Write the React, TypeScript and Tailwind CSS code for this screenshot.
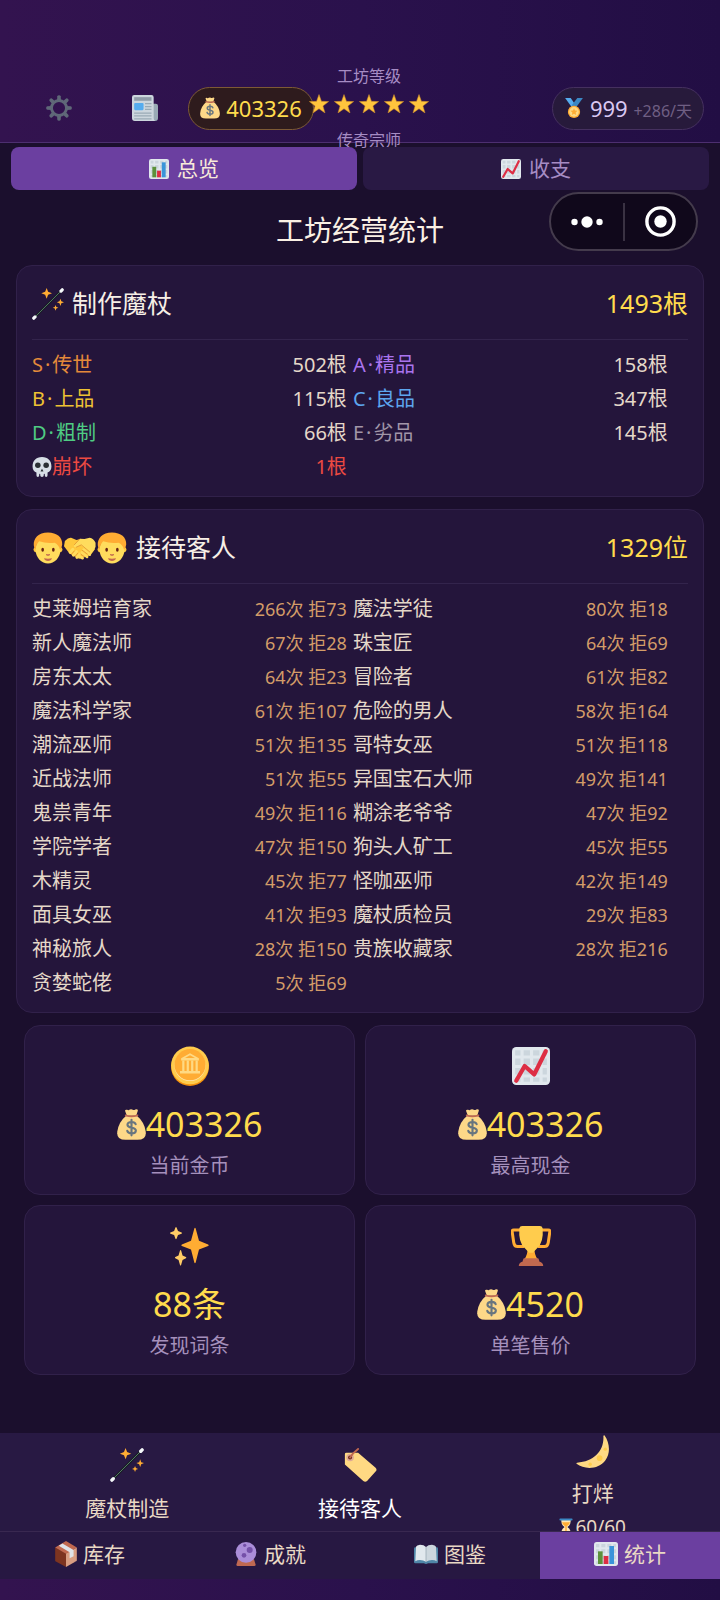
import type { ReactNode } from "react";

type IconProps = { className?: string };

function Svg({ className = "size-6", box = "0 0 36 36", children }: { className?: string; box?: string; children: ReactNode }) {
  return (
    <svg className={`shrink-0 ${className}`} viewBox={box} aria-hidden="true">
      {children}
    </svg>
  );
}

const TEETH = [0, 45, 90, 135, 180, 225, 270, 315];

function Gear({ className }: IconProps) {
  return (
    <Svg className={className}>
      <circle cx="18" cy="18" r="10.4" fill="none" stroke="#5f6878" strokeWidth="4" />
      {TEETH.map((a) => (
        <path key={a} d="M15.2 7.5 15.7 1.8Q16 .2 18 .2T20.3 1.8L20.8 7.5Z" fill="#5f6878" transform={`rotate(${a} 18 18)`} />
      ))}
    </Svg>
  );
}

function Newspaper({ className }: IconProps) {
  return (
    <Svg className={className}>
      <path d="M26 12h7a3 3 0 0 1 3 3v17a4 4 0 0 1-4 4h-6z" fill="#99aab5" />
      <path d="M3 0h24a3 3 0 0 1 3 3v29q0 3 2 4H4a4 4 0 0 1-4-4V3a3 3 0 0 1 3-3z" fill="#ccd6dd" />
      <path d="M3 3h24v5H3z" fill="#8f9ca8" />
      <rect x="3" y="11" width="13" height="10" rx="1.5" fill="#55acee" />
      <path d="M18 12h9M18 16h9M18 20h9M3 25h24M3 29h24M3 33h24" stroke="#99aab5" strokeWidth="1.7" />
    </Svg>
  );
}

function MoneyBag({ className }: IconProps) {
  return (
    <Svg className={className} box="1 0 34 36">
      <path d="M12.5 7.5 10.4 2Q10.6.2 13 .8q1.5 1 3-.4 2-.9 3.4.2 1.5 1 3-.2 2.9-.8 3.1 1.2L23.6 7.5z" fill="#fdd888" />
      <path d="M12 7.5h12q9 7.5 10.6 18.5Q36 36 25 36H11Q0 36 1.4 26 3 15 12 7.5z" fill="#fdd888" />
      <path d="M10.8 6.2Q18 8.6 25 6.2q1.4-.2 1 1.2-.3.9-1.3 1.1Q18 10.2 11.4 8.6q-1-.3-1.2-1.2-.2-1 .6-1.2z" fill="#bf6952" />
      <path d="M18 12.500v18.200M22.900 17.700c-.6-2-2.300-2.700-4.700-2.700-2.800 0-4.900 1.100-4.900 3.300 0 5 9.800 2 9.800 6.800 0 2.200-2 3.400-4.900 3.400-2.800 0-4.700-1-5.200-3.100" fill="none" stroke="#67757f" strokeWidth="2.5" strokeLinecap="round" />
    </Svg>
  );
}

function ChartPanel() {
  return (
    <>
      <rect width="36" height="36" rx="4" fill="#e1e8ed" />
      <path d="M3 3h5v5H3zm8 0h6v5h-6zm9 0h6v5h-6zm9 0h4v5h-4zM3 11h5v6H3zm8 0h6v6h-6zm9 0h6v6h-6zm9 0h4v6h-4zM3 20h5v6H3zm8 0h6v6h-6zm9 0h6v6h-6zm9 0h4v6h-4zM3 29h5v4H3zm8 0h6v4h-6zm9 0h6v4h-6zm9 0h4v4h-4z" fill="#ccd6dd" />
    </>
  );
}

function BarChart({ className }: IconProps) {
  return (
    <Svg className={className}>
      <ChartPanel />
      <path d="M6 14h7v19H6z" fill="#5c913b" />
      <path d="M14.5 21h7v12h-7z" fill="#dd2e44" />
      <path d="M23 6h7v27h-7z" fill="#3b94d9" />
    </Svg>
  );
}

function LineChart({ className }: IconProps) {
  return (
    <Svg className={className}>
      <ChartPanel />
      <path d="M4 32 12 18l9 8L32 4" fill="none" stroke="#dd2e44" strokeWidth="4" strokeLinecap="round" strokeLinejoin="round" />
    </Svg>
  );
}

function Medal({ className }: IconProps) {
  return (
    <Svg className={className}>
      <path d="M2 0h10l9 13-6 5z" fill="#55acee" />
      <path d="M34 0H24L14 13l7 5z" fill="#3b88c3" />
      <circle cx="18" cy="25" r="11" fill="#ffac33" />
      <circle cx="18" cy="25" r="8.6" fill="#ffd983" />
      <path d="m18 18.5 1.8 4.2 4.6.4-3.5 3 1.1 4.5-4-2.4-4 2.4 1.1-4.5-3.5-3 4.6-.4z" fill="#ffac33" />
    </Svg>
  );
}

function Star({ className }: IconProps) {
  return (
    <Svg className={className}>
      <path d="m18 1 4.4 12.2 13 .4-10.3 7.9 3.7 12.5L18 26.600 7.200 34l3.700-12.500L.600 13.600l13-.4z" fill="#ffc53d" stroke="#c9862c" strokeWidth="1" />
    </Svg>
  );
}

function Wand({ className }: IconProps) {
  return (
    <Svg className={className}>
      <path d="M3 33 33 3" stroke="#1a1f22" strokeWidth="2.400" />
      <path d="M3.500 32.500l29-29" stroke="#56806b" strokeWidth="1" />
      <path d="m2 34 1.400-1.400M32.600 3.400 34 2" stroke="#f5f8fa" strokeWidth="3.600" strokeLinecap="round" />
      <path d="m16.500 0 1.600 4.300 4.400 1.700-4.400 1.600-1.600 4.400-1.700-4.400-4.300-1.600 4.300-1.700zM32 12l1 3 3 1-3 1.200-1 3-1.100-3-3-1.200 3-1zM26.500 19l.9 2.300 2.300.9-2.300.9-.9 2.400-.9-2.400-2.300-.9 2.300-.9z" fill="#ffac33" />
    </Svg>
  );
}

function Skull({ className }: IconProps) {
  return (
    <Svg className={className}>
      <path d="M18 0C7 0 1 7 1 17c0 6 3 9 7 11v5q0 3 2.500 3t2.500-3v-2q0-1 .9-1t.9 1v2q0 3 3.200 3t3.200-3v-2q0-1 .9-1t.9 1v2q0 3 2.500 3t2.500-3v-5c4-2 7-5 7-11C35 7 29 0 18 0z" fill="#d7dfe6" />
      <circle cx="10.500" cy="15" r="5" fill="#292f33" />
      <circle cx="25.500" cy="15" r="5" fill="#292f33" />
      <path d="m18 21 2.600 4.500q-1.300 1.200-2.600 0-1.300 1.200-2.600 0z" fill="#292f33" />
    </Svg>
  );
}

function Face({ className }: IconProps) {
  return (
    <Svg className={className}>
      <circle cx="4.500" cy="20" r="2.800" fill="#ffc83d" />
      <circle cx="31.500" cy="20" r="2.800" fill="#ffc83d" />
      <path d="M18 4C9 4 4 11 4 20c0 9 7 15.500 14 15.500S32 29 32 20c0-9-5-16-14-16z" fill="#ffdc5d" />
      <path d="M18 .500C7 .500 1.500 7 2 15q.3 3.500 2 5 .5-6 4-9.500 9 3 17.500 1.500 5 2.500 6 8 2-2 2.500-6C34.500 6 28 .500 18 .500z" fill="#ffac33" />
      <ellipse cx="12" cy="20" rx="1.500" ry="2.300" fill="#662113" />
      <ellipse cx="24" cy="20" rx="1.500" ry="2.300" fill="#662113" />
      <path d="M16.500 25.500q1.500 1 3 0" stroke="#c1694f" strokeWidth="1.500" fill="none" strokeLinecap="round" />
      <path d="M13.500 29.500q4.500 1 9 0-1 3-4.500 3t-4.500-3z" fill="#c1694f" />
    </Svg>
  );
}

function Handshake({ className }: IconProps) {
  return (
    <Svg className={className}>
      <path d="M1 10Q5 6 8 6.500L14 9l5-1 8 3 8 8-5 7-13 4L6 24 0 16z" fill="#ffc83d" />
      <path d="M35.500 12Q33 7 29 6.500L23 8l-5-.500-7 7q-.5 3 3 2.500l5-2.500L30 25q3-3 5.500-8z" fill="#ffdc5d" />
      <path d="M7 23l3-3.500M10.500 26l3.500-4M14.500 28.500l3-3.500" stroke="#ffdc5d" strokeWidth="3.400" strokeLinecap="round" />
      <path d="m18 28 3 1.500M20 23l6 5M22 20l7 5.500" stroke="#ffdc5d" strokeWidth="3" strokeLinecap="round" />
      <path d="m11.500 14.500 6-6.500M14 17l5.500-2.500L29 22.500M20.500 20.500l6 4.500M8.500 25l3-3.500M12.500 27.500l3-3.500M19 25l4 3" stroke="#e39a34" strokeWidth="1" fill="none" strokeLinecap="round" />
    </Svg>
  );
}

function Coin({ className }: IconProps) {
  return (
    <Svg className={className}>
      <circle cx="18" cy="19" r="17" fill="#f4900c" />
      <circle cx="18" cy="17.500" r="17" fill="#ffcc4d" />
      <circle cx="18" cy="17.500" r="14" fill="#ffe8b6" />
      <circle cx="18" cy="16.800" r="14" fill="#ffac33" />
      <path d="M9 22.500h18v2.300H9zM10 11l8-4.500 8 4.500v2H10z" fill="#ffd983" />
      <path d="M12 13v10m4-10v10m4-10v10m4-10v10" stroke="#ffd983" strokeWidth="2" />
      <path d="M13.500 10.700 18 8.300l4.500 2.400z" fill="#ffac33" />
    </Svg>
  );
}

function Sparkles({ className }: IconProps) {
  return (
    <Svg className={className}>
      <path d="M34.300 16.600l-8.200-3.300-3-11.100q-.6-1.400-1.200 0l-3 11.100-8.200 3.300q-1.200.7 0 1.400l8.200 3.200 3 11.700q.6 1.400 1.200 0l3-11.700 8.200-3.200q1.300-.7 0-1.400z" fill="#ffac33" />
      <path d="m14.300 28-3-1.500-1.300-4.500q-.5-.9-1 0L7.700 26.500 4.800 28q-.7.500 0 1L7.700 30.500 9 35q.5.900 1 0l1.300-4.500 3-1.500q.7-.5 0-1zM10.400 5.800 7.200 4.600 5.900 1.300q-.5-.8-1 0L3.700 4.600.4 5.800q-.8.600 0 1.100l3.300 1.200 1.200 3.400q.5.800 1 0l1.300-3.400 3.200-1.200q.8-.5 0-1.100z" fill="#ffcc66" />
    </Svg>
  );
}

function Trophy({ className }: IconProps) {
  return (
    <Svg className={className}>
      <path d="M9 3.500H2.500Q1 3.500 1 5l1.500 10q.5 3.500 3.500 3.500h6M27 3.500h6.500Q35 3.500 35 5l-1.500 10q-.5 3.500-3.500 3.500h-6" fill="none" stroke="#ffac33" strokeWidth="2.700" />
      <path d="M15 20h6q0 6 3 10H12q3-4 3-10z" fill="#ffac33" />
      <path d="M7.500 2Q8 0 10 0h16q2 0 2.500 2 1 13-5 18-2.500 2.500-3.500 4h-4q-1-1.500-3.500-4-6-5-5-18z" fill="#ffcc4d" />
      <path d="M11.500 29h13q1 1.500 1 3 3.500 1 3.500 4H7q0-3 3.500-4 0-1.500 1-3z" fill="#c1694f" />
    </Svg>
  );
}

function Tag({ className }: IconProps) {
  return (
    <Svg className={className}>
      <path d="M3.500 5H16l18.500 16q2 2 0 4l-9 10q-2 1.700-4 0L2 17.500V6.500Q2 5 3.500 5z" fill="#ffd983" />
      <circle cx="7.500" cy="10" r="4" fill="#e0aa94" />
      <circle cx="7.500" cy="10" r="2.100" fill="#662113" />
      <path d="M7.500 10Q10 5.500 16 1" fill="none" stroke="#c1694f" strokeWidth="2" strokeLinecap="round" />
    </Svg>
  );
}

function Moon({ className }: IconProps) {
  return (
    <Svg className={className}>
      <path d="M30.300.500C35.500 8 37 19 31 27 24 36.500 9 37 .6 30.500q-.6-1 .6-1.100C19 28 30 17 29 1q.4-1.100 1.300-.5z" fill="#ffd983" />
      <circle cx="31" cy="15" r="1.800" fill="#ffcc4d" />
      <circle cx="25" cy="24.500" r="3" fill="#ffcc4d" />
      <circle cx="15" cy="31" r="1.800" fill="#ffcc4d" />
    </Svg>
  );
}

function Hourglass({ className }: IconProps) {
  return (
    <Svg className={className} box="3 0 30 36">
      <path d="M8 3h20q1 10-7 15 8 5 7 15H8Q7 23 15 18 7 13 8 3z" fill="#ffe8b6" />
      <path d="M9.500 8h17q-1 5-7 8.500v10q4 1.500 7 6h-17q3-4.500 7-6v-10q-6-3.500-7-8.500z" fill="#ffac33" />
      <rect x="4" width="28" height="4" rx="1.500" fill="#3b88c3" />
      <rect x="4" y="32" width="28" height="4" rx="1.500" fill="#3b88c3" />
    </Svg>
  );
}

function Parcel({ className }: IconProps) {
  return (
    <Svg className={className} box="0 0 30 36">
      <path d="M0 9 15 17v19L1 28.500Q0 28 0 27z" fill="#7d3420" />
      <path d="M15 17 30 9v17.500q0 1-1 1.600L15 36z" fill="#d99e82" />
      <path d="M15 0 30 9l-15 8.500L0 9z" fill="#c1694f" />
      <path d="m10 3.500 15.500 9V21L20 24v-8.500L5 6.500z" fill="#dfe3e8" />
    </Svg>
  );
}

function CrystalBall({ className }: IconProps) {
  return (
    <Svg className={className}>
      <path d="M6 26h24l2.500 8q0 2-2 2h-25q-2 0-2-2z" fill="#bf6952" />
      <circle cx="18" cy="15.500" r="15.500" fill="#aa8dd8" />
      <circle cx="23.500" cy="12" r="4.500" fill="#7450a8" />
      <circle cx="15" cy="20" r="3.500" fill="#7450a8" />
      <circle cx="16" cy="5" r="2.500" fill="#7450a8" />
    </Svg>
  );
}

function OpenBook({ className }: IconProps) {
  return (
    <Svg className={className}>
      <path d="M0 10q0-2 2-2h32q2 0 2 2v20q0 2-2 2H21q-3 2-6 0H2q-2 0-2-2z" fill="#4f86a8" />
      <path d="M3 7q1-2.500 6-3 6 0 9 3.500v22Q14 27 9 27q-4 0-7 2z" fill="#e1e8ed" />
      <path d="M33 7q-1-2.500-6-3-6 0-9 3.500v22q4-2.500 9-2.500 4 0 7 2z" fill="#ccd6dd" />
      <path d="M18 7.500v22" stroke="#99aab5" strokeWidth="1.200" />
    </Svg>
  );
}

type Grade = { rank?: string; name: string; count: string; tone: string; valueTone?: string };

const GRADES: Grade[] = [
  { rank: "S", name: "传世", count: "502根", tone: "text-[#e48a3a]" },
  { rank: "A", name: "精品", count: "158根", tone: "text-[#a974ee]" },
  { rank: "B", name: "上品", count: "115根", tone: "text-[#eec233]" },
  { rank: "C", name: "良品", count: "347根", tone: "text-[#5da5ee]" },
  { rank: "D", name: "粗制", count: "66根", tone: "text-[#4fcb83]" },
  { rank: "E", name: "劣品", count: "145根", tone: "text-[#a196a8]" },
  { name: "崩坏", count: "1根", tone: "text-[#ec4a42]", valueTone: "text-[#ec4a42]" },
];

const GUESTS: [string, number, number][] = [
  ["史莱姆培育家", 266, 73],
  ["魔法学徒", 80, 18],
  ["新人魔法师", 67, 28],
  ["珠宝匠", 64, 69],
  ["房东太太", 64, 23],
  ["冒险者", 61, 82],
  ["魔法科学家", 61, 107],
  ["危险的男人", 58, 164],
  ["潮流巫师", 51, 135],
  ["哥特女巫", 51, 118],
  ["近战法师", 51, 55],
  ["异国宝石大师", 49, 141],
  ["鬼祟青年", 49, 116],
  ["糊涂老爷爷", 47, 92],
  ["学院学者", 47, 150],
  ["狗头人矿工", 45, 55],
  ["木精灵", 45, 77],
  ["怪咖巫师", 42, 149],
  ["面具女巫", 41, 93],
  ["魔杖质检员", 29, 83],
  ["神秘旅人", 28, 150],
  ["贵族收藏家", 28, 216],
  ["贪婪蛇佬", 5, 69],
];

function Panel({ icon, title, total, children }: { icon: ReactNode; title: string; total: string; children: ReactNode }) {
  return (
    <section className="mx-4 rounded-2xl border border-[#31214a] bg-[#24153b] px-[15px] pb-3">
      <div className="flex h-[74px] items-center justify-between border-b border-[#33244c] pt-[2px] text-[25px]">
        <h2 className="flex items-center gap-2 text-[#f7efe6]">
          <span className="flex">{icon}</span>
          {title}
        </h2>
        <span className="text-[#ffdb4d]">{total}</span>
      </div>
      <dl className="flex flex-wrap gap-x-[6px] pt-2 text-xl leading-[34px] text-[#e5d8c9]">{children}</dl>
    </section>
  );
}

function StatCard({ icon, bag, value, label }: { icon: ReactNode; bag?: boolean; value: string; label: string }) {
  return (
    <div className="flex flex-col items-center rounded-2xl border border-[#31214a] bg-[#24153b] pt-5 pb-3">
      {icon}
      <p className="mt-3 flex items-center text-[34px] leading-[52px] text-[#ffdb4d]">
        {bag && <MoneyBag className="h-[33px] w-[29px]" />}
        {value}
      </p>
      <p className="text-xl leading-8 text-[#a590bc]">{label}</p>
    </div>
  );
}

function BottomTab({ icon, label, active }: { icon: ReactNode; label: string; active?: boolean }) {
  return (
    <button
      type="button"
      className={`flex flex-1 items-center justify-center gap-[6px] pb-1 text-[21px] leading-8 text-[#e9d8c4] ${active ? "bg-[#6b3fa0]" : ""}`}
    >
      {icon}
      {label}
    </button>
  );
}

export default function App() {
  return (
    <div className="relative flex min-h-screen flex-col bg-[#1b0f2d] font-['Noto_Sans','Noto_Sans_CJK_SC',sans-serif]">
      <header className="border-b border-[#4d2f70] bg-linear-to-r from-[#33134f] via-[#2a114c] to-[#220e44] px-4 pt-[74px]">
        <div className="flex h-[68px] items-center">
          <button type="button" aria-label="设置" className="flex w-[86px] justify-center">
            <Gear className="size-[26px]" />
          </button>
          <button type="button" aria-label="新闻" className="flex w-[86px] justify-center">
            <Newspaper className="size-[26px]" />
          </button>
          <div className="flex h-[43px] w-[126px] shrink-0 items-center justify-center gap-[6px] rounded-full border border-[#7d5a35] bg-[#2e1b1d] text-[22px] text-[#ffdb4d]">
            <MoneyBag className="h-[22px] w-[20px]" />
            403326
          </div>
          <div className="flex w-[110px] flex-col items-center text-base leading-5 text-[#a68cc4]">
            <span>工坊等级</span>
            <span className="mt-1 mb-3 flex h-7 items-center gap-[5px]">
              <Star className="size-5" />
              <Star className="size-5" />
              <Star className="size-5" />
              <Star className="size-5" />
              <Star className="size-5" />
            </span>
            <span>传奇宗师</span>
          </div>
          <div className="ml-auto flex h-[43px] items-center gap-[6px] rounded-full border border-[#45305f] bg-[#271a3b] px-[11px] text-[22px] text-[#d9c8f2]">
            <Medal className="size-5" />
            <span>
              999 <span className="text-base text-[#6f5f83]">+286/天</span>
            </span>
          </div>
        </div>
      </header>

      <nav className="flex gap-[6px] px-[11px] pt-1 text-[21px]">
        <button type="button" className="flex h-[43px] flex-1 items-center justify-center gap-2 rounded-lg bg-[#6b3fa0] text-[#f8ead9]">
          <BarChart className="size-5" />
          总览
        </button>
        <button type="button" className="flex h-[43px] flex-1 items-center justify-center gap-2 rounded-lg bg-[#291944] text-[#a68cc4]">
          <LineChart className="size-5" />
          收支
        </button>
      </nav>

      <div className="absolute top-[192px] right-[22px] flex h-[59px] w-[149px] items-center rounded-full border-2 border-[#443b4c] bg-[#10081b]">
        <button type="button" aria-label="更多" className="flex flex-1 justify-center">
          <Svg className="h-3 w-8" box="0 0 32 12">
            <circle cx="3.500" cy="6" r="3.200" fill="#fff" />
            <circle cx="16" cy="6" r="5.700" fill="#fff" />
            <circle cx="28.500" cy="6" r="3.200" fill="#fff" />
          </Svg>
        </button>
        <span className="h-[38px] w-[2px] bg-[#3a3243]" />
        <button type="button" aria-label="关闭" className="flex flex-1 justify-center">
          <Svg className="size-[31px]" box="0 0 31 31">
            <circle cx="15.500" cy="15.500" r="13.600" fill="none" stroke="#fff" strokeWidth="3.400" />
            <circle cx="15.500" cy="15.500" r="6.200" fill="#fff" />
          </Svg>
        </button>
      </div>

      <main>
        <h1 className="flex h-[75px] items-center justify-center pt-1 text-[28px] text-[#faf0e4]">工坊经营统计</h1>

        <div className="flex flex-col gap-3">
          <Panel icon={<Wand className="size-8" />} title="制作魔杖" total="1493根">
            {GRADES.map((g) => (
              <div key={g.name} className="flex w-[48%] justify-between">
                <dt className={`flex items-center ${g.tone}`}>
                  {g.rank ? (
                    <span>
                      {g.rank}
                      <span className="mx-[2px]">·</span>
                    </span>
                  ) : (
                    <Skull className="size-5" />
                  )}
                  {g.name}
                </dt>
                <dd className={g.valueTone}>{g.count}</dd>
              </div>
            ))}
          </Panel>

          <Panel
            icon={
              <>
                <Face className="size-8" />
                <Handshake className="size-8" />
                <Face className="size-8" />
              </>
            }
            title="接待客人"
            total="1329位"
          >
            {GUESTS.map(([name, served, refused]) => (
              <div key={name} className="flex w-[48%] justify-between">
                <dt>{name}</dt>
                <dd className="text-lg leading-[34px] text-[#d39c68]">
                  {served}次 拒{refused}
                </dd>
              </div>
            ))}
          </Panel>

          <section className="grid grid-cols-2 gap-[10px] px-6">
            <StatCard icon={<Coin className="size-10" />} bag value="403326" label="当前金币" />
            <StatCard icon={<LineChart className="my-px size-[38px]" />} bag value="403326" label="最高现金" />
            <StatCard icon={<Sparkles className="size-10" />} value="88条" label="发现词条" />
            <StatCard icon={<Trophy className="size-10" />} bag value="4520" label="单笔售价" />
          </section>
        </div>
      </main>

      <footer className="mt-auto bg-linear-to-r from-[#33134f] via-[#2a114c] to-[#220e44] pb-[21px]">
        <div className="flex h-[99px] overflow-hidden border-b border-[#392850] bg-[#281943] px-[11px] text-[21px] leading-8 text-[#e9d8c4]">
          <button type="button" className="flex flex-1 flex-col items-center gap-[10px] pt-[15px]">
            <Wand className="size-[34px]" />
            魔杖制造
          </button>
          <button type="button" className="flex flex-1 flex-col items-center gap-[10px] pt-[15px] text-white">
            <Tag className="size-[34px]" />
            接待客人
          </button>
          <button type="button" className="flex flex-1 flex-col items-center pt-[2px]">
            <Moon className="size-[34px]" />
            <span className="mt-2">打烊</span>
            <span className="flex items-center gap-[2px] text-[19px] leading-9">
              <Hourglass className="h-[18px] w-[14px]" />
              60/60
            </span>
          </button>
        </div>
        <nav className="flex h-[47px] bg-[#271842]">
          <BottomTab icon={<Parcel className="h-[26px] w-[22px]" />} label="库存" />
          <BottomTab icon={<CrystalBall className="size-6" />} label="成就" />
          <BottomTab icon={<OpenBook className="size-6" />} label="图鉴" />
          <BottomTab icon={<BarChart className="size-6" />} label="统计" active />
        </nav>
      </footer>
    </div>
  );
}
